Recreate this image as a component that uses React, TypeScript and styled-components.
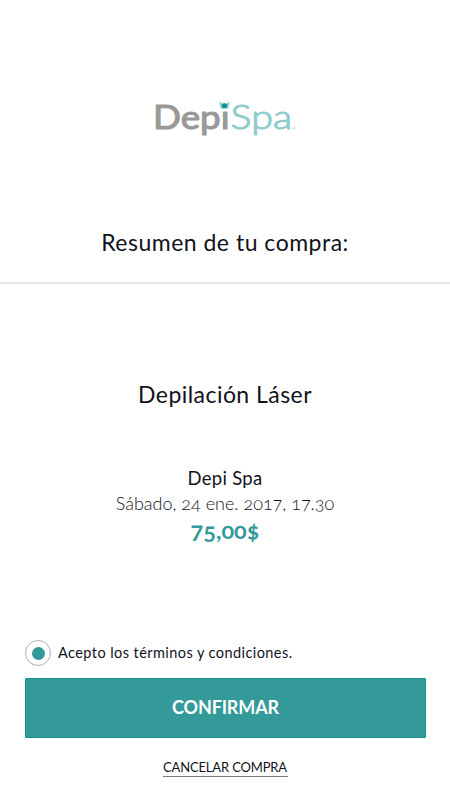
import React from "react";
import styled, { createGlobalStyle } from "styled-components";

const teal = "#339999";
const ink = "#11131b";

const GlobalStyle = createGlobalStyle`
  * { box-sizing: border-box; }
  body { margin: 0; background: #fff; }
`;

const Screen = styled.main`
  display: flex;
  flex-direction: column;
  width: 450px;
  height: 800px;
  overflow: hidden;
  background: #fff;
  color: ${ink};
  font-family: Lato, "Open Sans", sans-serif;
  font-variant-numeric: oldstyle-nums;
`;

const Header = styled.header`
  display: flex;
  flex-direction: column;
  align-items: center;
  height: 284px;
  padding-top: 90px;
  border-bottom: 2px solid #e6e6e6;
`;

const Logo = styled.svg`
  display: block;
  width: 160px;
  height: 55px;
`;

const Title = styled.h1`
  margin: 82px 0 0;
  font-size: 23px;
  font-weight: 400;
  line-height: 30px;
  letter-spacing: 0.5px;
  white-space: nowrap;
`;

const Summary = styled.section`
  display: flex;
  flex-direction: column;
  align-items: center;
  height: 356px;
  padding-top: 95px;
`;

const Service = styled.h2`
  margin: 0 0 56px;
  font-size: 23px;
  font-weight: 400;
  line-height: 30px;
  letter-spacing: 0.45px;
`;

const Place = styled.div`
  font-size: 18.5px;
  line-height: 26px;
  letter-spacing: 0.3px;
`;

const DateLine = styled.div`
  font-size: 18px;
  font-weight: 300;
  line-height: 24px;
  white-space: nowrap;
`;

const Price = styled.div`
  color: ${teal};
  font-size: 23.5px;
  font-weight: 700;
  line-height: 31px;
`;

const Terms = styled.label`
  display: flex;
  align-items: center;
  height: 26px;
  margin-left: 25px;
  gap: 7px;
  font-size: 14.5px;
  line-height: 20px;
  letter-spacing: 0.43px;
  white-space: nowrap;
`;

const Radio = styled.span`
  display: grid;
  place-items: center;
  width: 26px;
  height: 26px;
  border: 1px solid #aeb0ba;
  border-radius: 50%;

  &::after {
    content: "";
    width: 13px;
    height: 13px;
    border-radius: 50%;
    background: ${teal};
  }
`;

const Confirm = styled.button`
  width: 401px;
  height: 60px;
  margin: 12px 0 0 25px;
  padding: 0 0 3px;
  border: 1px solid #149490;
  border-radius: 1px;
  background: ${teal};
  color: #fff;
  font: 700 18px Lato, sans-serif;
  letter-spacing: -0.15px;
`;

const Cancel = styled.a`
  align-self: center;
  width: 125px;
  height: 18px;
  margin-top: 21px;
  border-bottom: 1px solid #777982;
  font-size: 13px;
  line-height: 17px;
  letter-spacing: -0.15px;
  text-align: center;
  white-space: nowrap;
`;

const Brand = () => (
  <Logo viewBox="145 90 160 55" role="img" aria-label="DepiSpa">
    <text x="153" y="129" fontSize="33" fill="#999" stroke="#999" strokeWidth="1.1" strokeLinejoin="round" textLength="76.5" lengthAdjust="spacingAndGlyphs">Depi</text>
    <rect x="219.5" y="100" width="10.5" height="10.3" fill="#fff" />
    <path d="M219.8 101.5 C219.2 105 220 108.5 223 109.3 L224.5 105 Z M229.2 101.5 C229.8 105 229 108.5 226 109.3 L224.5 105 Z" fill="#8dd1cf" />
    <rect x="222" y="103.2" width="5" height="5" rx="2" fill="#128c8c" />
    <text x="230.6" y="129.2" fontSize="33.5" fontWeight="300" fill="#91cccd" stroke="#91cccd" strokeWidth="1.1" strokeLinejoin="round" textLength="61.5" lengthAdjust="spacingAndGlyphs">Spa</text>
    <circle cx="293.8" cy="128.2" r="1.3" fill="#cfdddd" />
  </Logo>
);

export default function App() {
  return (
    <>
      <GlobalStyle />
      <Screen>
        <Header>
          <Brand />
          <Title>Resumen de tu compra:</Title>
        </Header>
        <Summary>
          <Service>Depilación Láser</Service>
          <Place>Depi Spa</Place>
          <DateLine>Sábado, 24 ene. 2017, 17.30</DateLine>
          <Price>75,00$</Price>
        </Summary>
        <Terms>
          <Radio />
          <span>Acepto los términos y condiciones.</span>
        </Terms>
        <Confirm>CONFIRMAR</Confirm>
        <Cancel>CANCELAR COMPRA</Cancel>
      </Screen>
    </>
  );
}
